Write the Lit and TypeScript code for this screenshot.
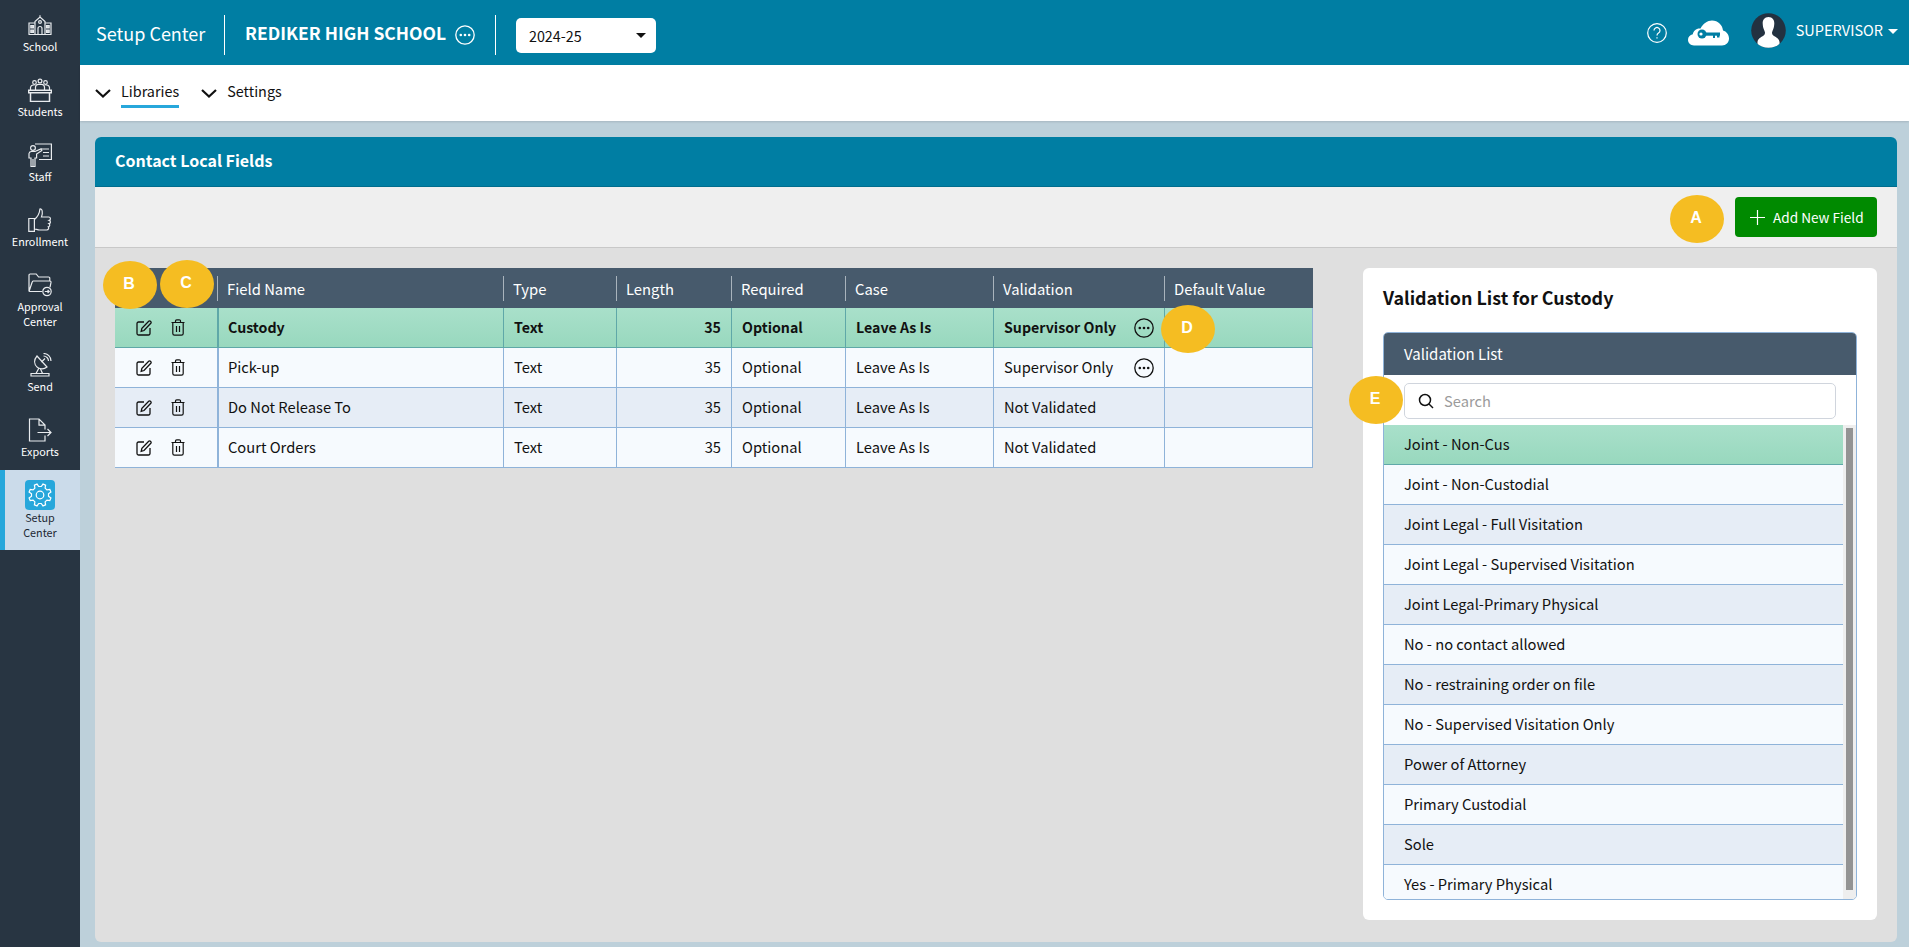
import { LitElement, html, css, svg } from "lit";
import { customElement } from "lit/decorators.js";

const gearPath = (() => {
  const teeth = 8, ro = 11.3, ri = 8.6, c = 12;
  let d = "";
  for (let i = 0; i < teeth; i++) {
    const a = (i * 2 * Math.PI) / teeth + Math.PI / 8;
    const w = Math.PI / teeth;
    const pts = [
      [ri, a - w * 0.62],
      [ro, a - w * 0.32],
      [ro, a + w * 0.32],
      [ri, a + w * 0.62],
    ];
    pts.forEach(([r, t], j) => {
      const x = (c + r * Math.cos(t)).toFixed(2);
      const y = (c + r * Math.sin(t)).toFixed(2);
      d += (i === 0 && j === 0 ? "M" : "L") + x + " " + y + " ";
    });
  }
  return d + "Z";
})();

const navIcons: Record<string, unknown> = {
  School: svg`<svg class="ni" viewBox="0 0 24 20"><path d="M1 19.5V8h6M23 19.5V8h-6M.5 19.5h23M7 19.5V6.5L12 2l5 4.5v13M10 19.5v-6a2 2 0 0 1 4 0v6M12 2V.3"/><circle cx="12" cy="7" r="1.4"/><path d="M2.8 10.5h2.6v2.4H2.8zM2.8 15h2.6v2.4H2.8zM18.6 10.5h2.6v2.4h-2.6zM18.6 15h2.6v2.4h-2.6zM4.1 10.5v2.4M4.1 15v2.4M19.9 10.5v2.4M19.9 15v2.4"/></svg>`,
  Students: svg`<svg class="ni" viewBox="0 0 24 24"><circle cx="6.5" cy="4.5" r="1.8"/><circle cx="12" cy="3" r="1.9"/><circle cx="17.5" cy="4.5" r="1.8"/><path d="M2.5 12V9.5a3 3 0 0 1 3-2.5h1.2M21.5 12V9.5a3 3 0 0 0-3-2.5h-1.2M7.5 12V9a3 3 0 0 1 3-2.6h3A3 3 0 0 1 16.5 9v3"/><path d="M.6 12.2h22.8v2.6H.6zM2.5 14.8v8.6h19v-8.6" stroke-width="1.5"/></svg>`,
  Staff: svg`<svg class="ni" viewBox="0 0 24 24"><path d="M7 1h16.4v15.5H11"/><path d="M13 6h8M15 9.5h6M15 13h6" /><circle cx="5" cy="5" r="2.4"/><path d="M3 23.5V15H1V10.5A2.5 2.5 0 0 1 3.5 8.5H7l6-2.6.8 1.6L8.6 11v4H7v8.5zM5 16v7.5"/></svg>`,
  Enrollment: svg`<svg class="ni" viewBox="0 0 24 24"><path d="M.8 10.5h5.6v12.8H.8zM6.4 11.5c3-2.5 5.2-5.6 5.5-10.5 2.4-.6 3.2 3.5 1.6 8h7.2c2.2 0 2.2 3 .6 3.4 1.6.6 1.5 3-.3 3.3 1.2.8 1 2.9-.7 3.2.9 1.1.3 3.1-1.6 3.1h-7c-2.4 0-3.6-1-5.3-1"/></svg>`,
  "Approval Center": svg`<svg class="ni" viewBox="0 0 24 24"><path d="M1 18.5V2.2A1.2 1.2 0 0 1 2.2 1h6l2.4 3h10A1.2 1.2 0 0 1 21.8 5.2V8M4.6 8h17.2a1.2 1.2 0 0 1 1.2 1.4l-1 5M1 18.5 4.2 9a1.3 1.3 0 0 1 1.2-1M1 18.5h13"/><circle cx="19" cy="18.5" r="4.2"/><path d="M16.8 18.5h4.4M19.6 17l1.6 1.5-1.6 1.5"/></svg>`,
  Send: svg`<svg class="ni" viewBox="0 0 24 24"><path d="M9 3c-3 3.500-3.500 8 .5 11.500 3.500 2 7 1.500 9.500-.5z"/><path d="M13.500 9 17 5.500M11 15l-3 5.500h6.500L12.500 16M3 20.500h18v2.500H3z"/><path d="M15.500 3a5 5 0 0 1 5 5M15.500.5a7.500 7.500 0 0 1 7.500 7.500"/></svg>`,
  Exports: svg`<svg class="ni" viewBox="0 0 24 24"><path d="M17 11.500V7l-6-6H1.500v22H17v-5.500M11 1v6.200h6M9.500 14.500H23M19.500 11l3.500 3.500-3.500 3.500"/></svg>`,
};

const nav = ["School", "Students", "Staff", "Enrollment", "Approval Center", "Send", "Exports"];

const editIcon = svg`<svg class="act" viewBox="0 0 16 16"><path d="M8 2H2.500A1.500 1.500 0 0 0 1 3.500v10A1.500 1.500 0 0 0 2.500 15h10a1.500 1.500 0 0 0 1.500-1.500V8"/><path d="M12.700 1.200a1.200 1.200 0 0 1 1.700 0l.4.400a1.200 1.200 0 0 1 0 1.700L8 10.500l-2.800.8.700-2.900z"/></svg>`;
const trashIcon = svg`<svg class="trash" viewBox="0 0 14 17"><path d="M.5 3.500h13M4.500 3.500V2A1.200 1.200 0 0 1 5.700.8h2.600A1.200 1.200 0 0 1 9.500 2v1.500M1.800 3.500v11a1.700 1.700 0 0 0 1.700 1.700h7a1.700 1.700 0 0 0 1.700-1.700v-11M5.500 7v6M8.500 7v6"/></svg>`;
const moreIcon = svg`<svg class="more" viewBox="0 0 20 20"><circle cx="10" cy="10" r="9.200"/><circle class="dot" cx="5.800" cy="10" r="1.300"/><circle class="dot" cx="10" cy="10" r="1.300"/><circle class="dot" cx="14.200" cy="10" r="1.300"/></svg>`;
const chevron = svg`<svg class="chev" viewBox="0 0 16 9"><path d="M1 1l7 6.500L15 1"/></svg>`;

const rows = [
  { name: "Custody", val: "Supervisor Only", more: true, sel: true },
  { name: "Pick-up", val: "Supervisor Only", more: true },
  { name: "Do Not Release To", val: "Not Validated" },
  { name: "Court Orders", val: "Not Validated" },
];

const listItems = [
  "Joint - Non-Cus",
  "Joint - Non-Custodial",
  "Joint Legal - Full Visitation",
  "Joint Legal - Supervised Visitation",
  "Joint Legal-Primary Physical",
  "No - no contact allowed",
  "No - restraining order on file",
  "No - Supervised Visitation Only",
  "Power of Attorney",
  "Primary Custodial",
  "Sole",
  "Yes - Primary Physical",
];

@customElement("app-root")
export class AppRoot extends LitElement {
  static styles = css`
    :host {
      display: flex;
      width: 1909px;
      height: 947px;
      overflow: hidden;
      position: relative;
      font-family: "Noto Sans CJK JP", "Noto Sans", sans-serif;
      color: #111;
      background: #bdd0da;
      font-size: 14.7px;
    }
    * { box-sizing: border-box; }

    .side { width: 80px; flex: none; background: #283542; color: #fff; display: flex; flex-direction: column; }
    .item { height: 65px; padding-top: 13px; display: flex; flex-direction: column; align-items: center; gap: 2px; font-size: 10.8px; line-height: 15px; text-align: center; }
    .item.tall { height: 80px; }
    .item.on { height: 80px; padding-top: 10px; gap: 0; background: #cbdbea; color: #1c2833; border-left: 5px solid #27a7db; padding-right: 5px; }
    .ni { width: 24px; height: 24px; fill: none; stroke: #e8ebee; stroke-width: 1.2; flex: none; }
    .tile { width: 30px; height: 30px; border-radius: 4px; background: #27a7db; display: flex; align-items: center; justify-content: center; }
    .tile svg { width: 24px; height: 24px; fill: none; stroke: #fff; stroke-width: 1.2; }
    .lab { width: 60px; }

    .main { flex: 1; display: flex; flex-direction: column; min-width: 0; }
    .top { height: 65px; background: #007ea3; color: #fff; display: flex; align-items: center; padding: 0 11px 0 16px; flex: none; }
    .app { font-size: 18px; line-height: 24px; width: 128px; }
    .sep { width: 1px; height: 40px; background: #fff; flex: none; margin-top: 5px; }
    .school { font-size: 17.5px; font-weight: 700; line-height: 24px; margin-left: 20px; width: 200px; white-space: nowrap; }
    .top .more { width: 20px; height: 20px; margin: 5px 20px 0 10px; }
    .top .more circle { stroke: #fff; }
    .top .more .dot { fill: #fff; stroke: none; }
    .year { width: 140px; height: 35px; margin: 6px 0 0 20px; border-radius: 5px; background: #fff; color: #111; display: flex; align-items: center; justify-content: space-between; padding: 0 10px 0 13px; line-height: 20px; font-size: 14.3px; }
    .car { width: 0; height: 0; border-left: 5px solid transparent; border-right: 5px solid transparent; border-top: 5px solid #111; }
    .grow { flex: 1; }
    .help { width: 20px; height: 20px; fill: none; stroke: #fff; stroke-width: 1.2; margin-right: 21px; flex: none; }
    .cloud { width: 41px; height: 26px; margin-right: 22px; flex: none; }
    .avatar { width: 35px; height: 35px; margin-right: 10px; margin-top: -4px; flex: none; }
    .user { font-size: 14.5px; line-height: 20px; margin-top: -5px; }
    .top .car.w { border-top-color: #fff; margin-left: 5px; margin-top: -3px; }

    .sub { height: 56px; background: #fff; display: flex; align-items: center; padding-left: 15px; flex: none; gap: 22px; box-shadow: 0 1px 2px rgba(0,0,0,.12); position: relative; }
    .tab { display: flex; align-items: center; gap: 10px; font-size: 14.4px; line-height: 20px; }
    .tab span { display: block; padding-bottom: 4px; border-bottom: 3px solid transparent; margin-top: 3px; }
    .tab.on span { border-bottom-color: #27a7db; }
    .chev { width: 16px; height: 9px; fill: none; stroke: #111; stroke-width: 2.2; }

    .card { margin: 16px 12px 5px 15px; flex: 1; border-radius: 6px; overflow: hidden; display: flex; flex-direction: column; background: #dfdfdf; }
    .head { height: 50px; background: #007ea3; border-bottom: 1px solid #006d8d; color: #fff; font-size: 16px; font-weight: 700; line-height: 47px; padding-left: 20px; flex: none; }
    .tools { height: 61px; background: #efefef; border-bottom: 1px solid #c8c8c8; display: flex; justify-content: flex-end; align-items: center; padding-right: 20px; flex: none; }
    .add { width: 142px; height: 40px; border-radius: 4px; background: #008a00; color: #fff; display: flex; align-items: center; gap: 8px; padding-left: 15px; font-size: 13.6px; line-height: 18px; }
    .add svg { width: 15px; height: 15px; stroke: #fff; stroke-width: 1.2; fill: none; }

    .body { flex: 1; display: flex; padding: 20px; justify-content: space-between; align-items: flex-start; }
    .table { width: 1198px; flex: none; }
    .row { display: grid; grid-template-columns: 102px 286px 113px 115px 114px 148px 171px 149px; height: 40px; }
    .row.hd { background: #475a6c; color: #fff; }
    .hc { position: relative; padding: 9px 0 0 10px; line-height: 24px; font-size: 14.8px; }
    .hc + .hc::before { content: ""; position: absolute; left: 0; top: 8px; height: 25px; width: 1px; background: #a9b3bc; }
    .c { display: flex; align-items: center; padding: 0 10px 2px; line-height: 20px; border-bottom: 1px solid #8fb3d9; border-left: 1px solid #8fb3d9; background: #f6fafe; white-space: nowrap; }
    .row:nth-child(even) .c { background: #e6edf6; }
    .row:nth-child(odd) .c { background: #f6fafe; }
    .c.ac { border-left: 0; justify-content: flex-start; gap: 19px; padding: 0 0 0 21px; }
    .c.nm { border-left-width: 2px; padding-left: 9px; }
    .c.num { justify-content: flex-end; }
    .c.val { justify-content: space-between; padding: 0 10px 0 10px; }
    .c.val span { margin-bottom: 2px; }
    .c.def { border-right: 1px solid #8fb3d9; }
    .row .c.sel { background: linear-gradient(#a9e0ca, #98d8be); border-bottom-color: #5fa8a8; border-left-color: #5fa8a8; font-weight: 700; font-size: 14.2px; }
    .act { width: 16px; height: 16px; fill: none; stroke: #111; stroke-width: 1.3; }
    .trash { width: 14px; height: 17px; fill: none; stroke: #111; stroke-width: 1.2; }
    .more { width: 20px; height: 20px; fill: none; flex: none; }
    .more circle { stroke: #111; stroke-width: 1.3; }
    .more .dot { fill: #111; stroke: none; }

    .panel { width: 514px; height: 652px; flex: none; background: #fff; border-radius: 6px; padding: 16px 20px 20px 20px; display: flex; flex-direction: column; }
    .panel h2 { margin: 0 0 22px; font-size: 17.9px; font-weight: 700; line-height: 26px; color: #111; }
    .lbox { flex: 1; min-height: 0; border: 1px solid #8fb3d9; border-radius: 5px; overflow: hidden; display: flex; flex-direction: column; }
    .lhead { height: 42px; background: #475a6c; color: #fff; line-height: 42px; padding-left: 20px; font-size: 15px; flex: none; }
    .search { height: 36px; margin: 8px 20px 6px 20px; flex: none; border: 1px solid #d0d5dd; border-radius: 5px; display: flex; align-items: center; padding-left: 13px; gap: 10px; background: #fff; }
    .search svg { width: 16px; height: 16px; fill: none; stroke: #111; stroke-width: 1.5; flex: none; }
    .search input { border: 0; outline: 0; flex: 1; min-width: 0; font: inherit; line-height: 20px; background: transparent; padding: 0; }
    .search input::placeholder { color: #9b9b9b; opacity: 1; }
    .lwrap { flex: 1; min-height: 0; display: flex; }
    .list { flex: 1; min-width: 0; overflow: hidden; }
    .sb { width: 13px; flex: none; background: #eee; padding: 3px 3px 9px; }
    .sb i { display: block; height: 100%; background: #939393; }
    .li { height: 40px; line-height: 38px; padding-left: 20px; border-bottom: 1px solid #8fb3d9; background: #f6fafe; white-space: nowrap; }
    .li:nth-child(odd) { background: #e6edf6; }
    .li.sel { background: linear-gradient(#a9e0ca, #98d8be); border-bottom-color: #5fa8a8; }

    .badge { position: absolute; width: 54px; height: 48px; padding: 0 2px 2px 0; border-radius: 50%; background: #f5bd22; color: #fff; font-family: "Liberation Sans", sans-serif; font-weight: 700; font-size: 16px; display: flex; align-items: center; justify-content: center; }
    .ba { left: 1670px; top: 195px; }
    .bb { left: 103px; top: 261px; }
    .bc { left: 160px; top: 260px; }
    .bd { left: 1161px; top: 305px; }
    .be { left: 1349px; top: 376px; }
  `;

  render() {
    return html`
      <aside class="side">
        ${nav.map(
          (n) => html`<div class="item ${n === "Approval Center" ? "tall" : ""}">${navIcons[n]}<div class="lab">${n}</div></div>`
        )}
        <div class="item on">
          <div class="tile"><svg viewBox="0 0 24 24"><path d=${gearPath} /><circle cx="12" cy="12" r="3.800" /></svg></div>
          <div class="lab">Setup Center</div>
        </div>
      </aside>
      <div class="main">
        <header class="top">
          <div class="app">Setup Center</div>
          <div class="sep"></div>
          <div class="school">REDIKER HIGH SCHOOL</div>
          ${moreIcon}
          <div class="sep"></div>
          <div class="year"><span>2024-25</span><i class="car"></i></div>
          <div class="grow"></div>
          <svg class="help" viewBox="0 0 20 20"><circle cx="10" cy="10" r="9.300" /><path d="M7 7.500a3 3 0 1 1 4.500 2.600c-1 .6-1.500 1.100-1.500 2.400" /><path d="M10 14.200v1.300" /></svg>
          <svg class="cloud" viewBox="0 0 41 26">
            <path fill="#fff" d="M6 25.500C2.500 25.500 0 23 0 19.800c0-2.800 2-5 4.800-5.500C5.500 10.500 8.500 8 12.500 8.500 15 3.500 19.500 .5 24 .5c6 0 10.500 4.500 11 10 3.500 1 6 4 6 8 0 4-3 7-7 7z" />
            <circle cx="14" cy="14" r="4.500" fill="#007ea3" />
            <rect x="17" y="12.500" width="15" height="3.200" fill="#007ea3" />
            <path fill="#007ea3" d="M25 15h2v3h-2zM29 15h2.500v2.500H29z" />
            <circle cx="13" cy="14" r="1.600" fill="#fff" />
          </svg>
          <svg class="avatar" viewBox="0 0 35 35">
            <defs><clipPath id="av"><circle cx="17.500" cy="17.500" r="17.300" /></clipPath></defs>
            <circle cx="17.500" cy="17.500" r="17.300" fill="#233140" />
            <path clip-path="url(#av)" fill="#fff" d="M17.500 4c-4 0-6 3-5.800 6.500.1 1.500.2 3.500 1 5.500.5 1.300 1 2.300 1.300 3.500 0 1.500-.5 2.500-2 3.500-2.500 1.500-5 2.500-5.500 6-.2 2 0 4 0 6h22c0-2 .2-4 0-6-.5-3.500-3-4.500-5.500-6-1.500-1-2-2-2-3.500.3-1.200.8-2.200 1.300-3.500.8-2 .9-4 1-5.500C23.500 7 21.500 4 17.500 4z" />
          </svg>
          <div class="user">SUPERVISOR</div>
          <i class="car w"></i>
        </header>
        <nav class="sub">
          <div class="tab on">${chevron}<span>Libraries</span></div>
          <div class="tab">${chevron}<span>Settings</span></div>
        </nav>
        <section class="card">
          <div class="head">Contact Local Fields</div>
          <div class="tools">
            <div class="add"><svg viewBox="0 0 15 15"><path d="M7.500 0v15M0 7.500h15" /></svg>Add New Field</div>
          </div>
          <div class="body">
            <div class="table">
              <div class="row hd">
                <div class="hc"></div>
                ${["Field Name", "Type", "Length", "Required", "Case", "Validation", "Default Value"].map(
                  (h) => html`<div class="hc">${h}</div>`
                )}
              </div>
              ${rows.map((r) => {
                const s = r.sel ? "sel" : "";
                return html`<div class="row">
                  <div class="c ac ${s}">${editIcon}${trashIcon}</div>
                  <div class="c nm ${s}">${r.name}</div>
                  <div class="c ${s}">Text</div>
                  <div class="c num ${s}">35</div>
                  <div class="c ${s}">Optional</div>
                  <div class="c ${s}">Leave As Is</div>
                  <div class="c val ${s}"><span>${r.val}</span>${r.more ? moreIcon : ""}</div>
                  <div class="c def ${s}"></div>
                </div>`;
              })}
            </div>
            <div class="panel">
              <h2>Validation List for Custody</h2>
              <div class="lbox">
                <div class="lhead">Validation List</div>
                <label class="search">
                  <svg viewBox="0 0 16 16"><circle cx="7" cy="7" r="5.500" /><path d="M11 11l4 4" /></svg>
                  <input placeholder="Search" />
                </label>
                <div class="lwrap">
                  <div class="list">
                    ${listItems.map((l, i) => html`<div class="li ${i === 0 ? "sel" : ""}">${l}</div>`)}
                  </div>
                  <div class="sb"><i></i></div>
                </div>
              </div>
            </div>
          </div>
        </section>
      </div>
      <div class="badge ba">A</div>
      <div class="badge bb">B</div>
      <div class="badge bc">C</div>
      <div class="badge bd">D</div>
      <div class="badge be">E</div>
    `;
  }
}
